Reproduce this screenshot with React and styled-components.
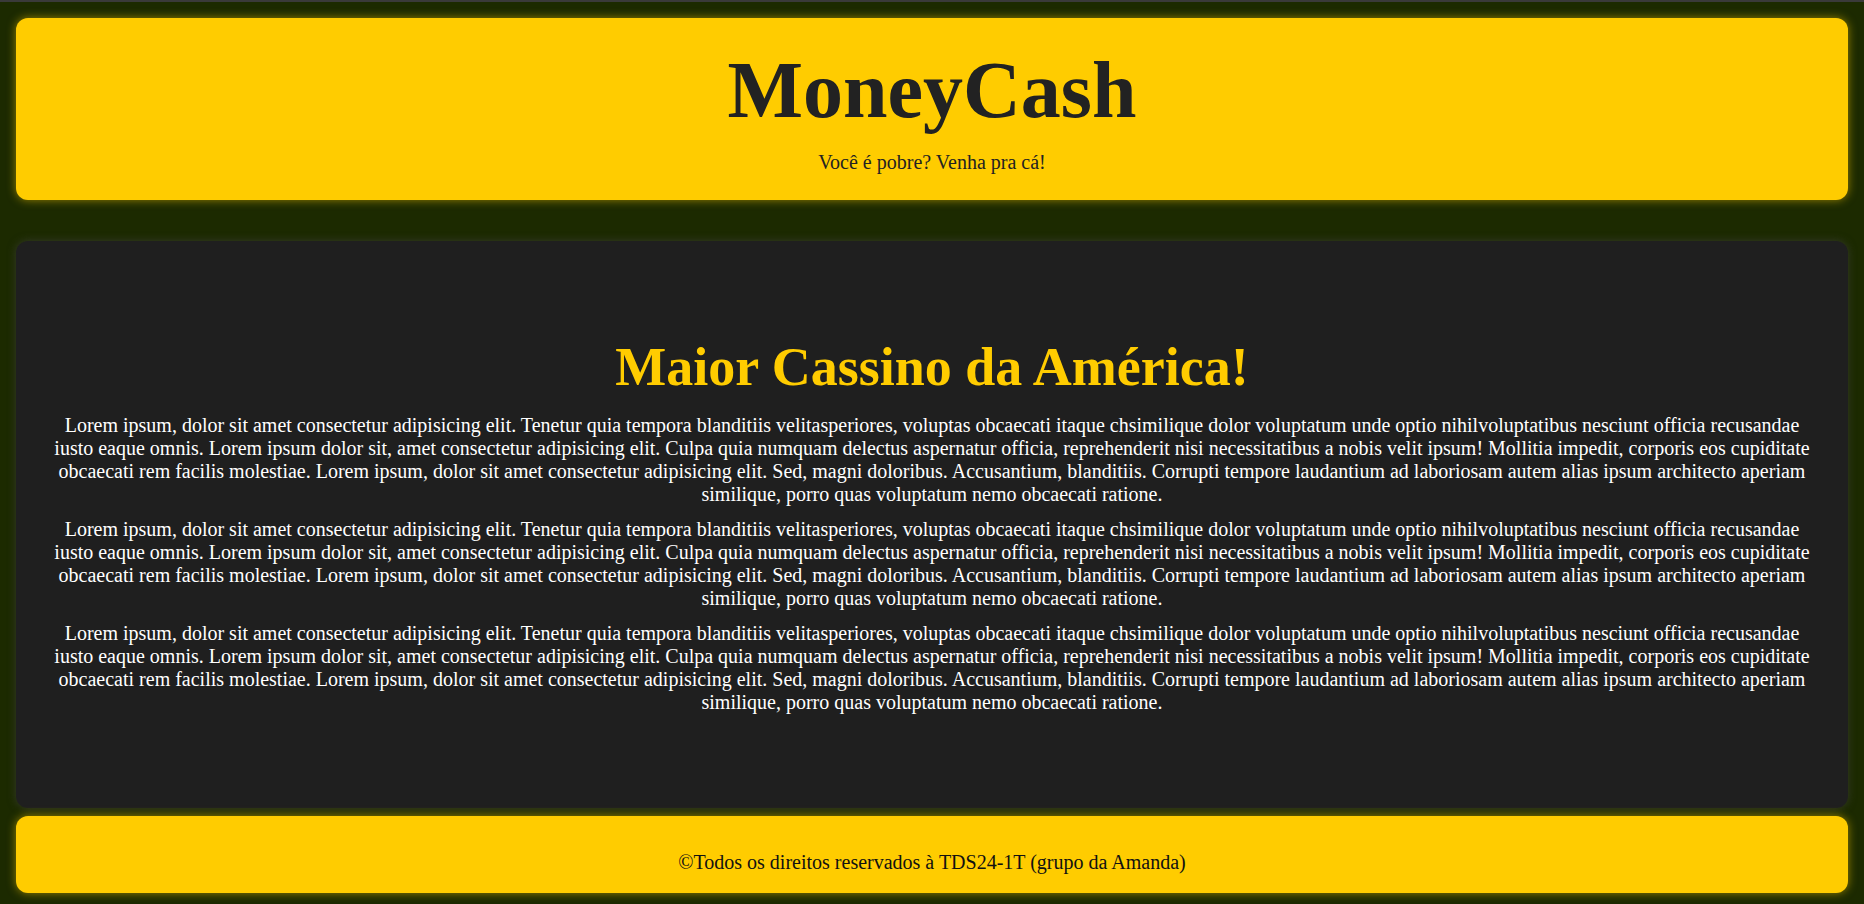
import React from 'react';
import styled, { createGlobalStyle } from 'styled-components';

const YELLOW = '#ffcc00';

const GlobalStyle = createGlobalStyle`
  html, body {
    margin: 0;
    padding: 0;
  }

  body {
    background-color: #1c2a00;
    font-family: "Liberation Serif", "Times New Roman", serif;
  }
`;

const Page = styled.div`
  box-sizing: border-box;
  min-height: 100vh;
  display: flex;
  flex-direction: column;
  padding: 16px 16px 11px;
  border-top: 2px solid #3a3a3a;
`;

const Header = styled.header`
  background-color: ${YELLOW};
  border-radius: 12px;
  box-shadow: 0 0 10px rgba(255, 204, 0, 0.55);
  padding: 27px 0 26px;
  text-align: center;
`;

const Brand = styled.h1`
  margin: 0;
  font-size: 80px;
  font-weight: bold;
  color: #222;
`;

const Tagline = styled.p`
  margin: 15px 0 0;
  font-size: 20px;
  color: #222;
`;

const Main = styled.main`
  flex: 1;
  margin-top: 41px;
  display: flex;
  flex-direction: column;
  justify-content: center;
  padding: 0 29px;
  background-color: #1f1f1f;
  border-radius: 12px;
  box-shadow: 0 0 8px rgba(70, 70, 70, 0.6);
  text-align: center;
`;

const Title = styled.h2`
  margin: 0 0 16px;
  font-size: 54px;
  font-weight: bold;
  color: ${YELLOW};
`;

const Paragraph = styled.p`
  margin: 0 0 12px;
  font-size: 20px;
  color: #fff;

  &:last-child {
    margin-bottom: 0;
  }
`;

const Footer = styled.footer`
  margin-top: 8px;
  background-color: ${YELLOW};
  border-radius: 12px;
  box-shadow: 0 0 10px rgba(255, 204, 0, 0.55);
  padding: 35px 0 19px;
  text-align: center;
  font-size: 20px;
  color: #111;
`;

const LOREM =
  'Lorem ipsum, dolor sit amet consectetur adipisicing elit. Tenetur quia tempora blanditiis velitasperiores, voluptas obcaecati itaque chsimilique dolor voluptatum unde optio nihilvoluptatibus nesciunt officia recusandae iusto eaque omnis. Lorem ipsum dolor sit, amet consectetur adipisicing elit. Culpa quia numquam delectus aspernatur officia, reprehenderit nisi necessitatibus a nobis velit ipsum! Mollitia impedit, corporis eos cupiditate obcaecati rem facilis molestiae. Lorem ipsum, dolor sit amet consectetur adipisicing elit. Sed, magni doloribus. Accusantium, blanditiis. Corrupti tempore laudantium ad laboriosam autem alias ipsum architecto aperiam similique, porro quas voluptatum nemo obcaecati ratione.';

const paragraphs = [1, 2, 3];

export default function App() {
  return (
    <>
      <GlobalStyle />
      <Page>
        <Header>
          <Brand>MoneyCash</Brand>
          <Tagline>Você é pobre? Venha pra cá!</Tagline>
        </Header>
        <Main>
          <Title>Maior Cassino da América!</Title>
          {paragraphs.map((id) => (
            <Paragraph key={id}>{LOREM}</Paragraph>
          ))}
        </Main>
        <Footer>©Todos os direitos reservados à TDS24-1T (grupo da Amanda)</Footer>
      </Page>
    </>
  );
}
